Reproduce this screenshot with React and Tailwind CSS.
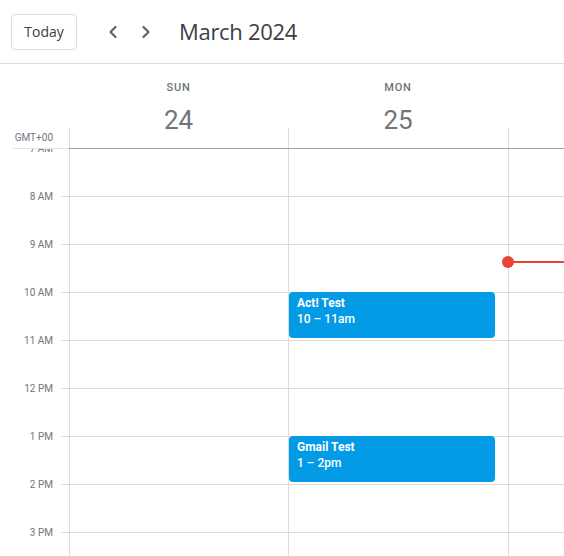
import { ChevronLeft, ChevronRight } from "lucide-react";

const hours = ["7 AM", "8 AM", "9 AM", "10 AM", "11 AM", "12 PM", "1 PM", "2 PM", "3 PM", "4 PM"];

function HourRows() {
  return (
    <>
      {hours.map((h) => (
        <div key={h} className="h-[48px] shrink-0 border-b border-[#dadce0]" />
      ))}
    </>
  );
}

function EventCard({ title, time, top }) {
  return (
    <div
      className="absolute left-0 w-[206px] h-[46px] rounded-[4px] bg-[#039be5] text-white text-[12px] leading-[16px] pl-[8px] pt-[3px]"
      style={{ top }}
    >
      <div className="font-bold">{title}</div>
      <div className="font-medium">{time}</div>
    </div>
  );
}

export default function App() {
  return (
    <div className="w-[564px] h-[556px] overflow-hidden bg-white flex flex-col font-['Roboto',sans-serif]">
      {/* Top bar */}
      <div className="h-[64px] shrink-0 border-b border-[#dadce0] flex items-center pl-[11px]">
        <button className="w-[66px] h-[36px] border border-[#dadce0] rounded-[4px] text-[14px] font-medium text-[#3c4043] font-['Open_Sans',sans-serif]">
          Today
        </button>
        <div className="flex items-center ml-[26px] gap-[13px] text-[#5f6368]">
          <ChevronLeft size={20} strokeWidth={2.6} />
          <ChevronRight size={20} strokeWidth={2.6} />
        </div>
        <div className="ml-[23px] text-[22px] text-[#3c4043] font-['Open_Sans',sans-serif] tracking-[-0.3px]">
          March 2024
        </div>
      </div>

      {/* Day headers */}
      <div className="h-[85px] shrink-0 flex">
        <div className="w-[69px] shrink-0 flex flex-col justify-end">
          <div className="text-[10px] leading-[14px] text-[#70757a] text-right pr-[16px] mb-[3px]">GMT+00</div>
          <div className="ml-[13px] h-px bg-[#e4e4e4]" />
        </div>
        {[
          { d: "SUN", n: "24", w: "w-[219px]" },
          { d: "MON", n: "25", w: "w-[220px]" },
          { d: "", n: "", w: "flex-1" },
        ].map((c, i) => (
          <div key={i} className={`${c.w} shrink-0 flex flex-col border-b border-[#a0a0a0]`}>
            <div className="h-[64px] flex flex-col items-center pt-[17px]">
              <div className="text-[11px] leading-[14px] font-medium tracking-[0.8px] text-[#70757a]">{c.d}</div>
              <div className="text-[26px] leading-[34px] mt-[8px] text-[#70757a]">{c.n}</div>
            </div>
            <div className="flex-1 border-l border-[#dadce0]" />
          </div>
        ))}
      </div>

      {/* Grid body */}
      <div className="flex-1 flex overflow-hidden">
        <div className="w-[69px] shrink-0 flex">
          <div className="w-[61px] flex flex-col -mt-[7px]">
            {hours.slice(0, 9).map((h) => (
              <div key={h} className="h-[48px] shrink-0 text-[10px] leading-[14px] text-[#70757a] text-right pr-[8px]">
                {h}
              </div>
            ))}
          </div>
          <div className="w-[8px] flex flex-col">
            <HourRows />
          </div>
        </div>

        <div className="w-[219px] shrink-0 border-l border-[#dadce0] flex flex-col">
          <HourRows />
        </div>

        <div className="w-[220px] shrink-0 border-l border-[#dadce0] flex flex-col relative">
          <HourRows />
          <EventCard title="Act! Test" time="10 – 11am" top={143} />
          <EventCard title="Gmail Test" time="1 – 2pm" top={287} />
        </div>

        <div className="flex-1 border-l border-[#dadce0] flex flex-col relative">
          <HourRows />
          <div className="absolute left-0 right-0 top-[112px] h-[2px] bg-[#ea4335]" />
          <div className="absolute -left-[7px] top-[107px] w-[12px] h-[12px] rounded-full bg-[#ea4335]" />
        </div>
      </div>
    </div>
  );
}
